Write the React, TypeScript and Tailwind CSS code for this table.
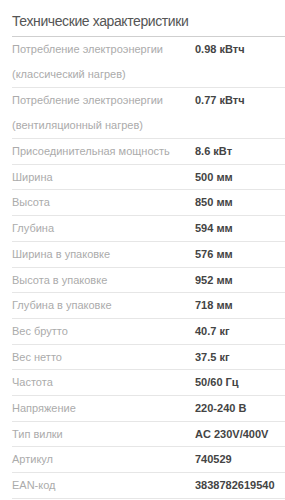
import { type FC } from 'react';

// Строки таблицы: подпись + значение (подпись может переноситься на 2 строки)
interface ISpecRow {
    label: string;
    value: string;
}

const SPECS: ISpecRow[] = [
    { label: 'Потребление электроэнергии (классический нагрев)', value: '0.98 кВтч' },
    { label: 'Потребление электроэнергии (вентиляционный нагрев)', value: '0.77 кВтч' },
    { label: 'Присоединительная мощность', value: '8.6 кВт' },
    { label: 'Ширина', value: '500 мм' },
    { label: 'Высота', value: '850 мм' },
    { label: 'Глубина', value: '594 мм' },
    { label: 'Ширина в упаковке', value: '576 мм' },
    { label: 'Высота в упаковке', value: '952 мм' },
    { label: 'Глубина в упаковке', value: '718 мм' },
    { label: 'Вес брутто', value: '40.7 кг' },
    { label: 'Вес нетто', value: '37.5 кг' },
    { label: 'Частота', value: '50/60 Гц' },
    { label: 'Напряжение', value: '220-240 В' },
    { label: 'Тип вилки', value: 'AC 230V/400V' },
    { label: 'Артикул', value: '740529' },
    { label: 'EAN-код', value: '3838782619540' },
];

const App: FC = () => {
    return (
        <div className="min-h-screen bg-white pl-[12px] font-['Liberation_Sans',Arial,sans-serif]">
            <h2 className="pt-[11px] pb-[5px] text-[14px] leading-[20px] tracking-[-0.4px] font-normal text-[#555] border-b border-[#cfcfcf]">
                Технические характеристики
            </h2>
            <div>
                {SPECS.map((row, i) => (
                    <div
                        key={row.label}
                        className={`grid grid-cols-[183px_1fr] border-b border-[#e6e6e6] text-[11px] ${
                            i < 2 ? 'leading-[25px]' : 'leading-[24.7px]'
                        }`}
                    >
                        <div className="text-[#ababab] pr-[10px]">{row.label}</div>
                        <div className="font-bold text-[#444] whitespace-nowrap">{row.value}</div>
                    </div>
                ))}
            </div>
        </div>
    );
};

export default App;
